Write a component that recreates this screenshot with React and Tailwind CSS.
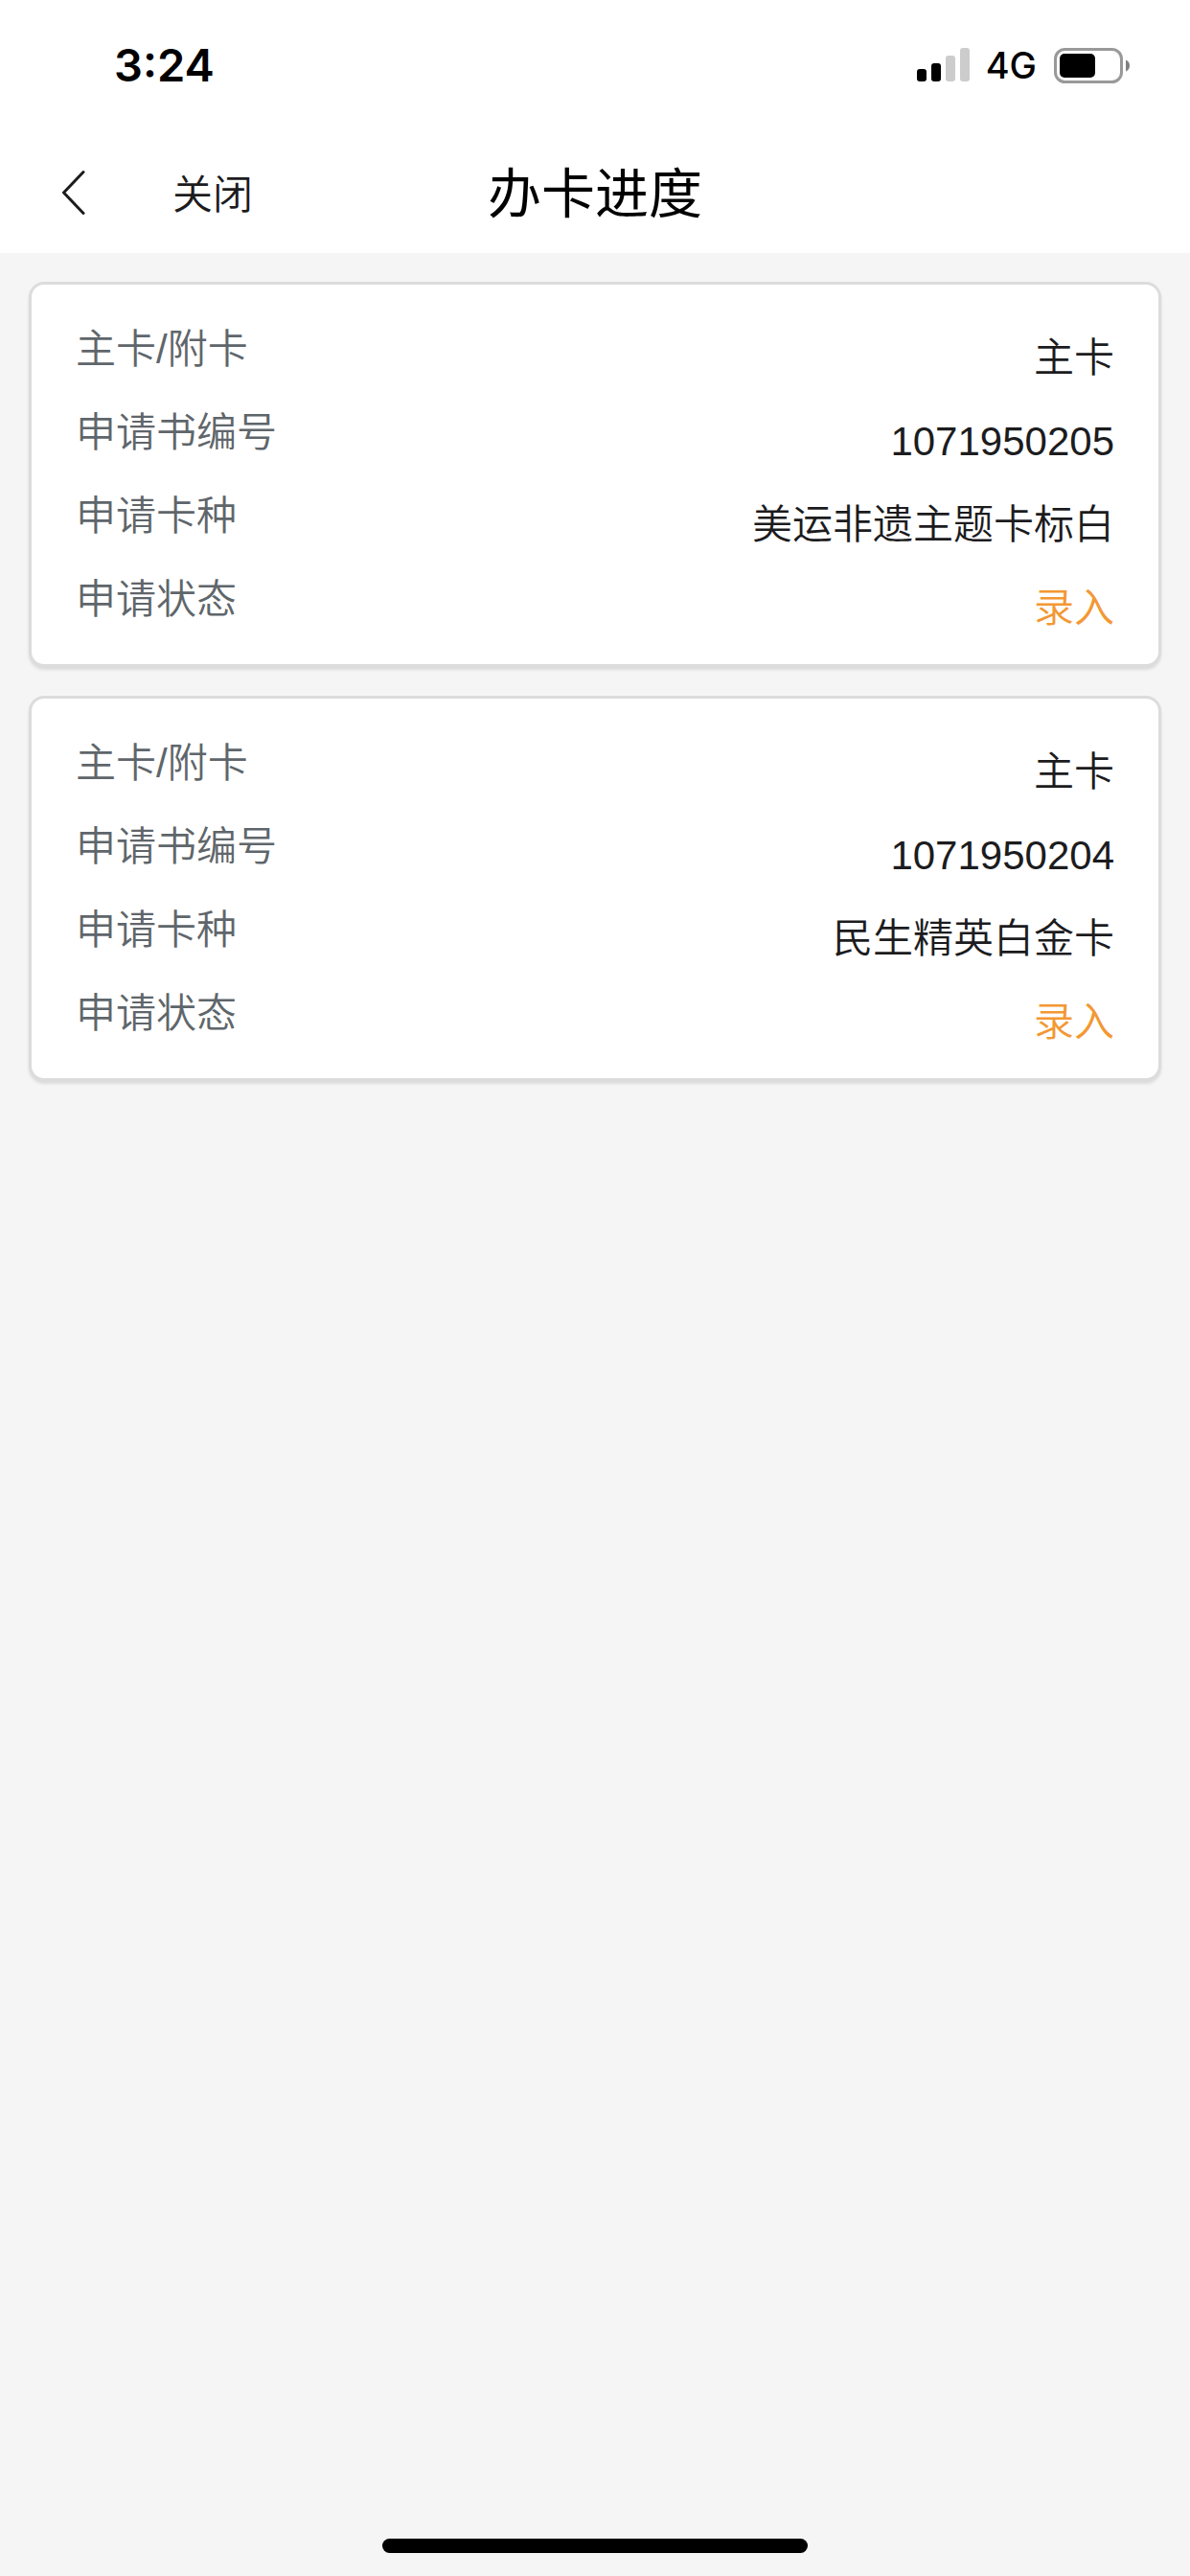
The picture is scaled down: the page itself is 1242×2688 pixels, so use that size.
const applications = [
  { id: '1071950205', cardType: '主卡', product: '美运非遗主题卡标白', status: '录入' },
  { id: '1071950204', cardType: '主卡', product: '民生精英白金卡', status: '录入' },
];

const StatusBar = () => (
  <div className="flex h-[136px] items-center justify-between pl-[119px] pr-[62px] font-['Inter',sans-serif] text-black">
    <span className="pb-0.5 text-[47px] leading-none font-semibold">3:24</span>
    <div className="flex items-center">
      <svg className="h-9 w-14" viewBox="0 0 56 36" aria-hidden="true">
        <rect x="0" y="22" width="10" height="13" rx="3" />
        <rect x="15" y="16" width="10" height="19" rx="3" />
        <rect x="30" y="8" width="10" height="27" rx="3" fill="#cccccc" />
        <rect x="45" y="0" width="10" height="35" rx="3" fill="#cccccc" />
      </svg>
      <span className="mr-[18px] ml-4 text-[38px] leading-none font-medium">4G</span>
      <svg className="h-[37px] w-20" viewBox="0 0 80 37" aria-hidden="true">
        <rect x="1.5" y="1.5" width="69" height="34" rx="10" fill="none" stroke="#999999" strokeWidth="3" />
        <rect x="6" y="6" width="37" height="25" rx="5" />
        <path d="M75 12.5C77.5 13.5 79 15.8 79 18.5S77.5 23.5 75 24.5Z" fill="#808080" />
      </svg>
    </div>
  </div>
);

const NavBar = () => (
  <header className="grid h-32 grid-cols-[1fr_auto_1fr] items-center">
    <div className="flex items-center">
      <button type="button" aria-label="返回" className="ml-16">
        <svg className="h-12 w-7" viewBox="0 0 28 48" fill="none" stroke="#1c1c1e" strokeWidth="3" strokeLinecap="round" strokeLinejoin="round">
          <path d="M23 3.5 2.5 25 23 46.5" />
        </svg>
      </button>
      <button type="button" className="ml-[88px] pt-1.5 text-[42px] text-[#1c1c1e]">关闭</button>
    </div>
    <h1 className="pt-1.5 text-[56px] font-normal text-black">办卡进度</h1>
  </header>
);

const Row = ({ label, value, valueClass = 'text-[#1c1c1e]' }) => (
  <div className="flex h-[87px] justify-between text-[42px] leading-[78px]">
    <dt className="self-start text-[#5f666b]">{label}</dt>
    <dd className={`self-end text-right ${valueClass}`}>{value}</dd>
  </div>
);

const ApplicationCard = ({ item }) => (
  <li className="rounded-2xl border-3 border-[#dcdcdc] bg-white px-[46px] pt-[29px] pb-[19px] shadow-[0_3px_3px_#dcdcdc]">
    <dl>
      <Row label="主卡/附卡" value={item.cardType} />
      <Row label="申请书编号" value={item.id} />
      <Row label="申请卡种" value={item.product} />
      <Row label="申请状态" value={item.status} valueClass="text-[#f39833]" />
    </dl>
  </li>
);

export default function App() {
  return (
    <div lang="zh-CN" className="flex min-h-screen flex-col bg-[#f5f5f5] font-['Liberation_Sans','Noto_Sans_CJK_SC',sans-serif] font-[350]">
      <div className="bg-white">
        <StatusBar />
        <NavBar />
      </div>
      <main className="flex-1 p-[30px]">
        <ul className="flex flex-col gap-[30px]">
          {applications.map(item => (
            <ApplicationCard key={item.id} item={item} />
          ))}
        </ul>
      </main>
      <div className="mx-auto mb-6 h-[15px] w-[444px] rounded-full bg-black" />
    </div>
  );
}
